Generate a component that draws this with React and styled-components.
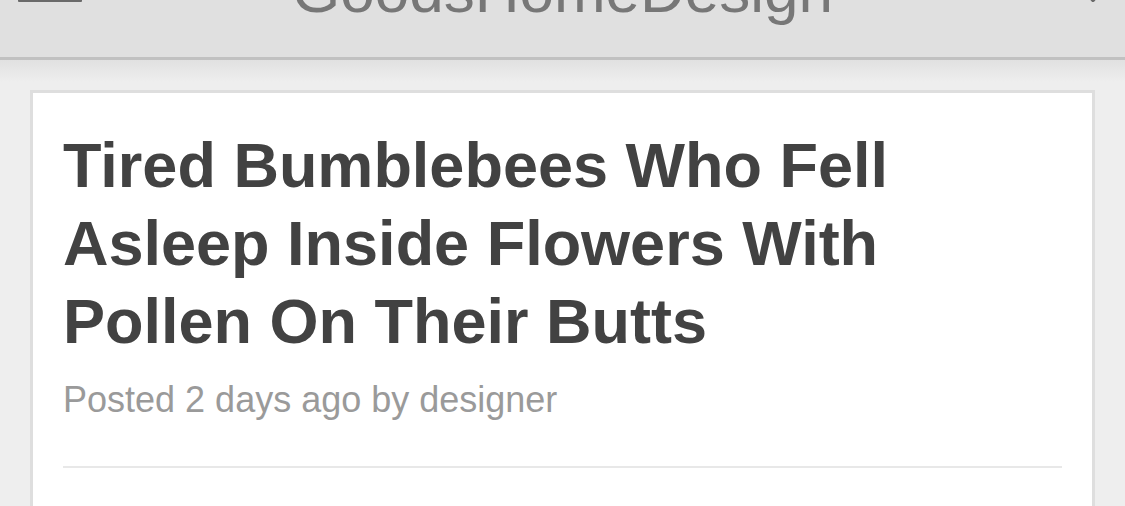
import React from 'react'
import styled, { createGlobalStyle } from 'styled-components'

const GlobalStyle = createGlobalStyle`
  html, body {
    margin: 0;
    padding: 0;
    background: #eeeeee;
    overflow: hidden;
  }
  * { box-sizing: border-box; }
`

const Page = styled.div`
  width: 1125px;
  height: 506px;
  overflow: hidden;
  font-family: "Liberation Sans", Arial, Helvetica, sans-serif;
`

// the screenshot is cropped through the top bar, so its row sits mostly above the view
const Header = styled.header`
  height: 60px;
  background: #e0e0e0;
  border-bottom: 3px solid #c1c1c1;
  overflow: hidden;
  display: grid;
  grid-template-columns: 1fr auto 1fr;
  align-items: end;
  align-content: end;
  padding: 0 18px;
`

const Burger = styled.div`
  justify-self: start;
  width: 64px;
  display: flex;
  flex-direction: column;
  gap: 10px;
  margin-bottom: 55px;

  span {
    display: block;
    height: 5px;
    background: #6a6a6a;
    border-radius: 1px;
  }
`

const Brand = styled.h1`
  margin: 0 0 35px;
  font-size: 62px;
  line-height: 62px;
  font-weight: 400;
  color: #777777;
  white-space: nowrap;
`

const Chevron = styled.svg`
  justify-self: end;
  margin-right: -3px;
  margin-bottom: 53px;
  display: block;
`

const Main = styled.main`
  padding: 30px 30px 0;
  background: linear-gradient(to bottom, #e1e1e1 0, #eeeeee 22px) #eeeeee;
`

const Card = styled.article`
  background: #ffffff;
  border: 3px solid #dedede;
  padding: 33px 30px 0;
  min-height: 600px;
`

const Title = styled.h2`
  margin: 0;
  font-size: 63px;
  line-height: 78px;
  font-weight: 700;
  color: #424242;
  max-width: 840px;
`

const Meta = styled.p`
  margin: 18px 0 0;
  font-size: 36px;
  line-height: 43px;
  color: #9a9a9a;
`

const Divider = styled.hr`
  margin: 45px 0 0;
  border: 0;
  height: 2px;
  background: #e8e8e8;
`

function App() {
  return (
    <Page>
      <GlobalStyle />
      <Header>
        <Burger>
          <span />
          <span />
          <span />
        </Burger>
        <Brand>GoodsHomeDesign</Brand>
        <Chevron width="34" height="24" viewBox="0 0 34 24">
          <polyline points="3,3 17,20 31,3" fill="none" stroke="#6a6a6a" strokeWidth="4" strokeLinecap="round" strokeLinejoin="round" />
        </Chevron>
      </Header>
      <Main>
        <Card>
          <Title>Tired Bumblebees Who Fell Asleep Inside Flowers With Pollen On Their Butts</Title>
          <Meta>Posted 2 days ago by designer</Meta>
          <Divider />
        </Card>
      </Main>
    </Page>
  )
}

export default App
